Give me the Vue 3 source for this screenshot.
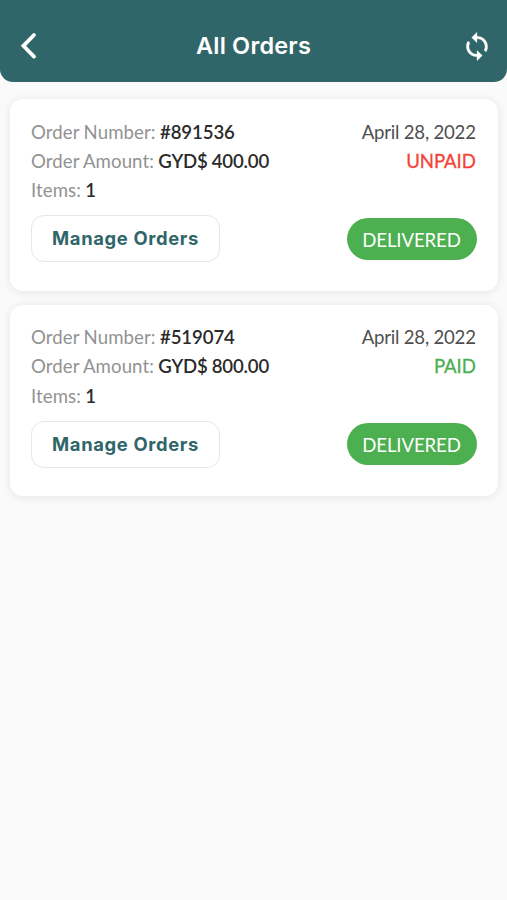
<script setup>
const orders = [
  { number: '#891536', amount: 'GYD$ 400.00', items: 1, date: 'April 28, 2022', payment: 'UNPAID', status: 'DELIVERED' },
  { number: '#519074', amount: 'GYD$ 800.00', items: 1, date: 'April 28, 2022', payment: 'PAID', status: 'DELIVERED' },
]
</script>

<template>
  <div class="screen">
    <header class="header">
      <button class="icon-button" aria-label="Back">
        <svg width="18" height="28" viewBox="0 0 18 28" fill="none" stroke="#fff" stroke-width="3.8" stroke-linecap="round" stroke-linejoin="miter">
          <path d="M15 3 4.4 13.8 15 24.6" />
        </svg>
      </button>
      <h1 class="title">All Orders</h1>
      <button class="icon-button" aria-label="Refresh">
        <svg width="32" height="31" viewBox="0 0 24 24" preserveAspectRatio="none" fill="#fff" stroke="#fff" stroke-width="0.2">
          <path d="M12 4V1L8 5l4 4V6c3.31 0 6 2.69 6 6 0 1.01-.25 1.97-.7 2.8l1.46 1.46C19.54 15.03 20 13.57 20 12c0-4.42-3.58-8-8-8zm0 14c-3.31 0-6-2.69-6-6 0-1.01.25-1.97.7-2.8L5.24 7.74C4.46 8.97 4 10.43 4 12c0 4.42 3.58 8 8 8v3l4-4-4-4v3z" />
        </svg>
      </button>
    </header>
    <main class="orders">
      <article v-for="order in orders" :key="order.number" class="card">
        <div class="row">
          <p class="field">Order Number: <b class="number">{{ order.number }}</b></p>
          <span class="date">{{ order.date }}</span>
        </div>
        <div class="row">
          <p class="field">Order Amount: <b class="amount">{{ order.amount }}</b></p>
          <span class="payment" :class="order.payment.toLowerCase()">{{ order.payment }}</span>
        </div>
        <div class="row">
          <p class="field">Items: <b>{{ order.items }}</b></p>
        </div>
        <div class="actions">
          <button class="manage">Manage Orders</button>
          <span class="status">{{ order.status }}</span>
        </div>
      </article>
    </main>
  </div>
</template>

<style>
body {
  margin: 0;
  background: #fafafa;
}
</style>

<style scoped>
.screen {
  min-height: 900px;
  background: #fafafa;
  font-family: Lato, sans-serif;
  font-size: 18.6px;
}
.header {
  box-sizing: border-box;
  height: 82px;
  padding: 10px 14px 0 19px;
  display: grid;
  grid-template-columns: 56px 1fr 61px;
  align-items: center;
  background: #306669;
  border-radius: 0 0 13px 13px;
}
.icon-button {
  display: flex;
  padding: 0;
  border: 0;
  background: none;
}
.icon-button:last-child {
  justify-content: flex-end;
}
.title {
  margin: 0;
  text-align: center;
  color: #fff;
  font: 600 23.5px/30px Inter, sans-serif;
  letter-spacing: 0.2px;
}
.orders {
  display: flex;
  flex-direction: column;
  gap: 14px;
  padding: 17px 9.5px 0 10px;
}
.card {
  box-sizing: border-box;
  height: 191.5px;
  padding: 18.8px 21px 0 21px;
  background: #fff;
  border-radius: 13px;
  box-shadow: 0 1px 10px rgba(0, 0, 0, 0.09);
}
.row {
  display: flex;
  justify-content: space-between;
  height: 29.2px;
  line-height: 29px;
  padding-right: 0.8px;
  white-space: nowrap;
}
.field {
  margin: 0;
  color: #929292;
  letter-spacing: 0.1px;
  word-spacing: -0.5px;
}
.field b {
  color: #2a2a2a;
  font-weight: 600;
  letter-spacing: -0.1px;
}
.field .amount {
  letter-spacing: -0.15px;
}
.date {
  color: #4f4f4f;
  letter-spacing: -0.22px;
}
.payment {
  letter-spacing: -0.1px;
  -webkit-text-stroke: 0.3px currentColor;
}
.unpaid {
  color: #f44336;
}
.paid {
  color: #4caf50;
}
.actions {
  display: flex;
  justify-content: space-between;
  align-items: center;
  margin-top: 9.7px;
}
.manage {
  box-sizing: border-box;
  width: 189px;
  height: 47px;
  padding: 0 0 1px;
  border: 1.5px solid #e6e6e6;
  border-radius: 13px;
  background: #fff;
  color: #306669;
  font: 700 18.4px/24px Inter, sans-serif;
  white-space: nowrap;
  letter-spacing: 0.65px;
}
.status {
  width: 130px;
  height: 42px;
  line-height: 44px;
  border-radius: 21px;
  background: #4caf50;
  color: #fff;
  text-align: center;
  letter-spacing: -0.1px;
}
</style>
